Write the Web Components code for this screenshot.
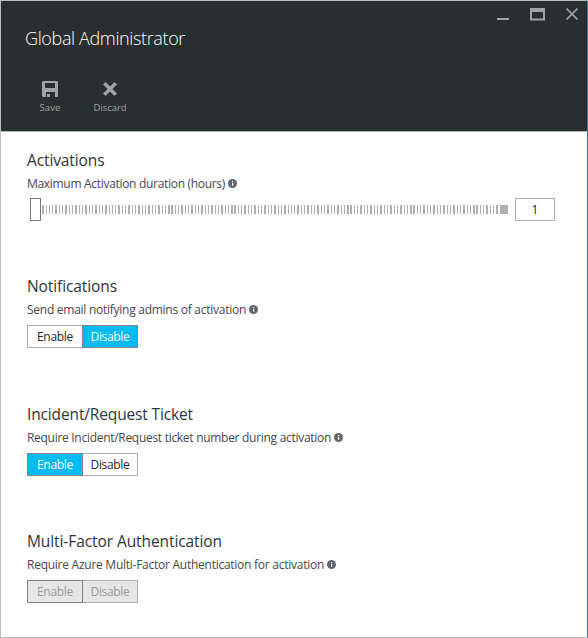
<!DOCTYPE html>
<html lang="en"><head><meta charset="utf-8"><title>Global Administrator</title>
<style>
html,body{margin:0;height:100%;overflow:hidden}
body{font-family:"Open Sans","Noto Sans",sans-serif;color:#30343b}
</style></head><body>
<role-blade></role-blade>
<script>
const define=(name,html,setup)=>customElements.define(name,class extends HTMLElement{
  connectedCallback(){
    if(this.shadowRoot)return;
    this.attachShadow({mode:'open'}).innerHTML=html;
    if(setup)setup(this,this.shadowRoot);
  }
});

/* Text run whose tracking is adjusted to fill the width given in "w". */
define('fit-text',`<style>:host{display:inline-block;white-space:nowrap}span{display:inline-block}</style><span><slot></slot></span>`,(el,root)=>{
  const s=root.querySelector('span'),w=+el.getAttribute('w');
  const n=el.textContent.length,natural=s.getBoundingClientRect().width;
  if(natural)s.style.letterSpacing=((w-natural)/n)+'px';
});

define('info-icon',`<style>:host{display:block;width:9px;height:9px}svg{display:block}</style>
<svg width="9" height="9" viewBox="0 0 9 9"><circle cx="4.5" cy="4.5" r="4.5" fill="#60666b"/><path d="M4 2h1.2v1.1H4zM4 3.8h1.2v3H4z" fill="#fff"/></svg>`);

define('tool-button',`<style>:host{display:flex;flex-direction:column;align-items:center;width:60px;color:#a0a4a6;font-size:9.5px;line-height:14px}
.i{height:16px;margin-bottom:4px}</style><div class="i"><slot name="icon"></slot></div><slot></slot>`);

define('toggle-option',`<style>:host{display:flex;align-items:center;justify-content:center;box-sizing:border-box;width:56px;height:23px;padding-top:1px;border:1px solid #adadad;background:#fff;color:#24282e;font-size:12px;line-height:16px}
:host(:last-of-type){margin-left:-1px}
:host([on]){background:#00bcf2;color:#fff;border-color:#808285;z-index:1}
:host([off]){background:#e6e6e6;color:#9a9a9a}
:host([edge]){border-color:#808080;z-index:1}</style><slot></slot>`);

define('toggle-pair',`<style>:host{display:flex;margin-top:7px}</style><slot></slot>`);

define('setting-section',`<style>:host{display:block;height:127px}
:host(:nth-of-type(1)){height:126px}
:host(:nth-of-type(2)){height:128px}
.h{display:block;font-size:15.5px;line-height:22px;color:#30343b}
.d{display:flex;align-items:center;gap:3px;font-size:12px;line-height:16px;margin-top:5px;color:#45484c}
info-icon{margin-top:-1px}</style>
<div class="h"><slot name="title"></slot></div><div class="d"><slot name="desc"></slot><info-icon></info-icon></div><slot></slot>`);

define('duration-slider',`<style>:host{display:flex;align-items:center;margin:6px 0 0 3px;height:23px}
.t{box-sizing:border-box;width:11px;height:23px;border:1px solid #777;background:#fff}
svg{display:block}
.v{box-sizing:border-box;width:40px;height:23px;border:1px solid #adadad;margin-left:7px;font-size:12px;line-height:22px;text-align:center;color:#24282e}</style>
<div class="t"></div><svg width="467" height="9" shape-rendering="crispEdges"></svg><div class="v">1</div>`,(el,root)=>{
  let d='';
  for(let k=0;k<138;k++){
    const s=1.7+3.315*k,x=Math.floor(s),w=Math.floor(s+1.35)-x;
    d+=`M${x} 0h${w}v9h-${w}z`;
  }
  root.querySelector('svg').innerHTML=`<path fill="#b0b0b0" d="${d}M459 0h8v9h-8z"/>`;
});

define('blade-header',`<style>:host{display:block;position:relative;height:130px;background:#292e31;border-bottom:1px solid #b0b3b3}
.w{position:absolute;right:0;top:0}
.t{padding:24px 0 0 24px;font-size:18px;line-height:26px;font-weight:300;color:#fff}
.b{display:flex;padding:30px 0 0 19px}</style>
<svg class="w" width="96" height="30" fill="none" stroke="#a0a4a6"><path d="M6 18h12" stroke-width="2"/><path d="M40 8v10.500h13V8" stroke-width="2"/><path d="M39 9h15" stroke-width="4"/><path d="M75.5 7.500l11 11M86.500 7.500L75.5 18.5" stroke-width="1.7"/></svg>
<div class="t"><fit-text w="160">Global Administrator</fit-text></div>
<div class="b"><tool-button><svg slot="icon" width="16" height="16" viewBox="0 0 16 16"><path fill="#a0a4a6" fill-rule="evenodd" d="M1 0h14l1 1v15h-3v-5H4v5H1L0 15V1zM3 2v5h10V2z"/><path fill="#a0a4a6" d="M5 13h3v3H5z"/></svg><fit-text w="21">Save</fit-text></tool-button>
<tool-button><svg slot="icon" width="16" height="16"><path d="M2.3 2.3l11.400 11.400M13.700 2.300l-11.400 11.400" stroke="#a0a4a6" stroke-width="3.5"/></svg><fit-text w="33">Discard</fit-text></tool-button></div>`);

define('role-blade',`<style>:host{display:block;box-sizing:border-box;width:588px;height:638px;border:1px solid #bcbfbf;border-right-color:#3a7896;background:#fff}
main{padding:17px 0 0 26px}</style>
<blade-header></blade-header><main>
<setting-section><fit-text slot="title" w="77.500">Activations</fit-text><fit-text slot="desc" w="198">Maximum Activation duration (hours)</fit-text><duration-slider></duration-slider></setting-section>
<setting-section><fit-text slot="title" w="90">Notifications</fit-text><fit-text slot="desc" w="219">Send email notifying admins of activation</fit-text>
<toggle-pair><toggle-option><fit-text w="36">Enable</fit-text></toggle-option><toggle-option on><fit-text w="39">Disable</fit-text></toggle-option></toggle-pair></setting-section>
<setting-section><fit-text slot="title" w="166">Incident/Request Ticket</fit-text><fit-text slot="desc" w="304">Require Incident/Request ticket number during activation</fit-text>
<toggle-pair><toggle-option on><fit-text w="36">Enable</fit-text></toggle-option><toggle-option><fit-text w="39">Disable</fit-text></toggle-option></toggle-pair></setting-section>
<setting-section><fit-text slot="title" w="195">Multi-Factor Authentication</fit-text><fit-text slot="desc" w="297">Require Azure Multi-Factor Authentication for activation</fit-text>
<toggle-pair><toggle-option off edge><fit-text w="36">Enable</fit-text></toggle-option><toggle-option off><fit-text w="39">Disable</fit-text></toggle-option></toggle-pair></setting-section>
</main>`);
</script></body></html>
